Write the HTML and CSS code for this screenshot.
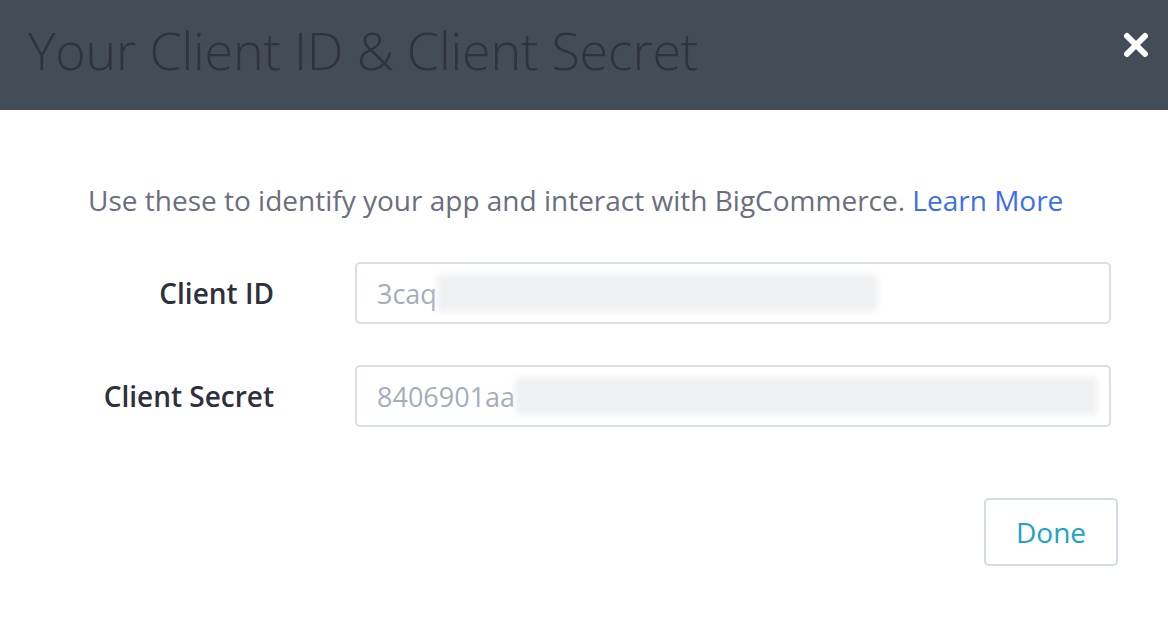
FILE: index.html
```html
<!DOCTYPE html>
<html>
<head>
<meta charset="utf-8">
<link rel="stylesheet" href="styles.css">
</head>
<body>
<div class="modal">
  <header class="modal-header">
    <h1 class="modal-title">Your Client ID &amp; Client Secret</h1>
    <button class="close-btn" aria-label="Close">
      <svg width="26" height="26" viewBox="0 0 26 26"><path d="M4 4 L22 22 M22 4 L4 22" stroke="#fff" stroke-width="6" stroke-linecap="round"/></svg>
    </button>
  </header>
  <main class="modal-body">
    <p class="intro">Use these to identify your app and interact with BigCommerce. <a class="link" href="#">Learn More</a></p>
    <div class="form">
      <div class="row">
        <label class="label">Client ID</label>
        <div class="field"><span class="value">3caq</span><span class="blur blur-id"></span></div>
      </div>
      <div class="row">
        <label class="label">Client Secret</label>
        <div class="field"><span class="value">8406901aa</span><span class="blur blur-secret"></span></div>
      </div>
    </div>
    <div class="actions">
      <button class="done">Done</button>
    </div>
  </main>
</div>
</body>
</html>
```
FILE: styles.css
```css
html, body { margin: 0; padding: 0; background: #fff; }
body { font-family: "Open Sans", "Liberation Sans", sans-serif; width: 1168px; height: 620px; overflow: hidden; }
.modal { display: flex; flex-direction: column; height: 620px; }
.modal-header {
  height: 110px; background: #434d57; display: flex; align-items: center;
  justify-content: space-between; padding: 0 17px 0 28px; box-sizing: border-box;
}
.modal-title {
  margin: 0; font-weight: 300; font-size: 52px; color: #2f323f; letter-spacing: -0.2px;
  line-height: 1; position: relative; top: -5px;
}
.close-btn { background: none; border: 0; padding: 0; width: 30px; height: 30px; display: flex; align-items: center; justify-content: center; position: relative; top: -10px; }
.modal-body { padding: 0 50px 0 0; }
.intro {
  margin: 75px 0 0 88px; font-size: 28px; color: #6b6e7c; line-height: 30px;
}
.link { color: #3c6ef0; text-decoration: none; }
.form { margin-top: 47px; display: flex; flex-direction: column; gap: 41px; }
.row { display: flex; align-items: center; }
.label { width: 274px; text-align: right; font-size: 28px; font-weight: 600; color: #2e303d; }
.field {
  margin-left: 81px; width: 756px; height: 62px; box-sizing: border-box; border: 2px solid #d9dfe6;
  border-radius: 5px; display: flex; align-items: center; padding-left: 20px; overflow: hidden;
}
.value { font-size: 27px; color: #a4adbb; }
.blur { height: 36px; background: #eff0f2; filter: blur(3px); }
.blur-id { width: 440px; }
.blur-secret { width: 582px; }
.actions { display: flex; justify-content: flex-end; margin-top: 71px; }
.done {
  width: 134px; height: 68px; background: #fff; border: 2px solid #d3dbe3; border-radius: 5px;
  font-family: "Open Sans", sans-serif; font-size: 28px; color: #1ba4c3; margin-right: 0;
}
```
